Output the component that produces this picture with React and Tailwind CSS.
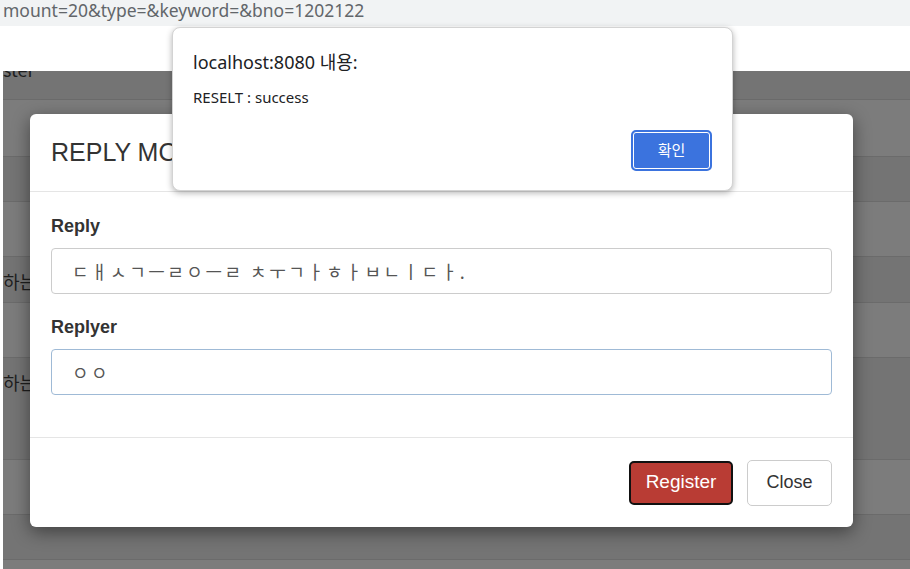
import { useState } from 'react';

const rows = [
    { h: 'h-[29px]', bg: 'bg-[#747474]', text: 'ster', cut: true },
    { h: 'h-[57px]', bg: 'bg-[#7c7c7c]' },
    { h: 'h-[45px]', bg: 'bg-[#747474]' },
    { h: 'h-[55px]', bg: 'bg-[#7c7c7c]' },
    { h: 'h-[46px]', bg: 'bg-[#747474]', text: '하는' },
    { h: 'h-[55px]', bg: 'bg-[#7c7c7c]' },
    { h: 'h-[102px]', bg: 'bg-[#747474]', text: '하는' },
    { h: 'h-[55px]', bg: 'bg-[#7c7c7c]' },
    { h: 'h-[45px]', bg: 'bg-[#747474]' },
    { h: 'h-[20px]', bg: 'bg-[#7c7c7c]' },
];

const App = () => {
    const [reply, setReply] = useState('ㄷㅐㅅㄱㅡㄹㅇㅡㄹ ㅊㅜㄱㅏㅎㅏㅂㄴㅣㄷㅏ.');
    const [replyer, setReplyer] = useState('ㅇㅇ');

    return (
        <div className="relative w-[910px] h-[569px] overflow-hidden bg-white font-['Liberation_Sans','Noto_Sans_CJK_KR',sans-serif]">
            {/* address bar */}
            <div className="h-[26px] bg-[#f1f3f4] pl-[3px]">
                <div className="text-[17.5px] leading-[20px] text-[#62666a] font-['Noto_Sans',sans-serif] whitespace-nowrap">
                    mount=20&amp;type=&amp;keyword=&amp;bno=1202122
                </div>
            </div>
            <div className="h-[45px] bg-white" />

            {/* dimmed page behind the modal */}
            <div className="ml-[3px] flex flex-col">
                {rows.map((r, i) => (
                    <div key={i} className={`${r.h} ${r.bg} border-b border-[#6b6b6b] overflow-hidden text-[18px] text-[#1e1e1e] font-['Noto_Sans_CJK_KR',sans-serif]`}>
                        {r.text && (
                            <div className={r.cut ? '-mt-[14px] leading-[24px]' : 'mt-[12px] leading-[24px]'}>{r.text}</div>
                        )}
                    </div>
                ))}
            </div>

            {/* reply modal */}
            <div className="absolute left-[30px] top-[114px] w-[823px] h-[413px] bg-white rounded-[6px] shadow-[0_5px_18px_rgba(0,0,0,0.45)] flex flex-col">
                <div className="h-[78px] px-[21px] flex items-center border-b border-[#e5e5e5]">
                    <h4 className="text-[25px] text-[#333] leading-none">REPLY MODAL</h4>
                </div>
                <div className="flex-1 px-[21px] pt-[24px] flex flex-col">
                    <label className="text-[18px] font-bold text-[#333] leading-[20px]">Reply</label>
                    <input
                        className="mt-[12px] h-[46px] w-full rounded-[4px] border border-[#cccccc] px-[20px] text-[18px] text-[#555] tracking-[2.5px] font-['Noto_Sans_CJK_KR',sans-serif] outline-none"
                        value={reply}
                        onChange={(e) => setReply(e.target.value)}
                    />
                    <label className="mt-[23px] text-[18px] font-bold text-[#333] leading-[20px]">Replyer</label>
                    <input
                        className="mt-[12px] h-[46px] w-full rounded-[4px] border border-[#9fbad6] px-[20px] text-[18px] text-[#555] tracking-[2.5px] font-['Noto_Sans_CJK_KR',sans-serif] outline-none"
                        value={replyer}
                        onChange={(e) => setReplyer(e.target.value)}
                    />
                </div>
                <div className="h-[90px] border-t border-[#e5e5e5] px-[21px] flex items-center justify-end gap-[14px]">
                    <button className="h-[44px] w-[104px] rounded-[5px] border-2 border-[#111] bg-[#b93c34] text-white text-[19px]">
                        Register
                    </button>
                    <button className="h-[46px] w-[85px] rounded-[5px] border border-[#ccc] bg-white text-[#333] text-[18px]">
                        Close
                    </button>
                </div>
            </div>

            {/* browser alert */}
            <div className="absolute left-[172px] top-[27px] w-[561px] h-[164px] bg-white rounded-[8px] border border-[#d3d3d3] shadow-[0_2px_6px_rgba(0,0,0,0.3)] flex flex-col px-[20px] font-['Noto_Sans','Noto_Sans_CJK_KR',sans-serif]">
                <div className="mt-[21px] text-[18px] leading-[26px] text-[#202124]">localhost:8080 내용:</div>
                <div className="mt-[12px] text-[15px] leading-[20px] text-[#202124]">RESELT : success</div>
                <div className="mt-auto mb-[19px] flex justify-end">
                    <button className="h-[41px] w-[81px] rounded-[5px] bg-[#3b73de] border-[2px] border-[#3b73de] text-white text-[15px]">
                        <span className="flex h-full w-full items-center justify-center rounded-[3px] border border-white">확인</span>
                    </button>
                </div>
            </div>
        </div>
    );
};

export default App;
